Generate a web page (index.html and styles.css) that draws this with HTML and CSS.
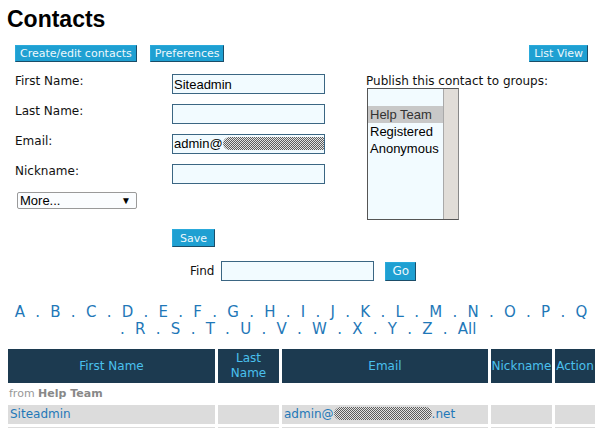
FILE: index.html
```html
<!DOCTYPE html>
<html>
<head>
  <title>Contacts</title>
  <link rel="stylesheet" href="styles.css">
</head>
<body>
  <h1>Contacts</h1>

  <div class="toolbar">
    <div class="toolbar-left">
      <button class="btn">Create/edit contacts</button>
      <button class="btn">Preferences</button>
    </div>
    <button class="btn">List View</button>
  </div>

  <form class="contact-form">
    <div class="fields">
      <div class="field-row">
        <label>First Name:</label>
        <input class="text-input" type="text" value="Siteadmin">
      </div>
      <div class="field-row">
        <label>Last Name:</label>
        <input class="text-input" type="text">
      </div>
      <div class="field-row">
        <label>Email:</label>
        <div class="text-input">admin@<span class="redacted wide"></span></div>
      </div>
      <div class="field-row">
        <label>Nickname:</label>
        <input class="text-input" type="text">
      </div>
      <div class="more-select">
        <span>More...</span>
        <span class="arrow">&#9660;</span>
      </div>
    </div>

    <div class="groups">
      <div class="groups-label">Publish this contact to groups:</div>
      <div class="group-list">
        <div class="options">
          <div class="option">&nbsp;</div>
          <div class="option selected">Help Team</div>
          <div class="option">Registered</div>
          <div class="option">Anonymous</div>
        </div>
        <div class="scroll-track"></div>
      </div>
    </div>
  </form>

  <div class="actions">
    <button class="btn btn-save">Save</button>
  </div>

  <div class="find-row">
    <span class="find-label">Find</span>
    <input class="text-input" type="text">
    <button class="btn btn-go">Go</button>
  </div>

  <div class="alphabet">
    <a href="#">A</a> . <a href="#">B</a> . <a href="#">C</a> . <a href="#">D</a> . <a href="#">E</a> . <a href="#">F</a> . <a href="#">G</a> . <a href="#">H</a> . <a href="#">I</a> . <a href="#">J</a> . <a href="#">K</a> . <a href="#">L</a> . <a href="#">M</a> . <a href="#">N</a> . <a href="#">O</a> . <a href="#">P</a> . <a href="#">Q</a> . <a href="#">R</a> . <a href="#">S</a> . <a href="#">T</a> . <a href="#">U</a> . <a href="#">V</a> . <a href="#">W</a> . <a href="#">X</a> . <a href="#">Y</a> . <a href="#">Z</a> . <a href="#">All</a>
  </div>

  <table class="contacts">
    <colgroup>
      <col class="col-first">
      <col class="col-last">
      <col class="col-email">
      <col class="col-nick">
      <col class="col-action">
    </colgroup>
    <thead>
      <tr>
        <th>First Name</th>
        <th>Last Name</th>
        <th>Email</th>
        <th>Nickname</th>
        <th>Action</th>
      </tr>
    </thead>
    <tbody>
      <tr class="group-row">
        <td colspan="5">from <b>Help Team</b></td>
      </tr>
      <tr class="data-row">
        <td><a href="#">Siteadmin</a></td>
        <td></td>
        <td><a href="#">admin@<span class="redacted"></span>.net</a></td>
        <td></td>
        <td></td>
      </tr>
      <tr class="data-row">
        <td>&nbsp;</td>
        <td></td>
        <td></td>
        <td></td>
        <td></td>
      </tr>
    </tbody>
  </table>
</body>
</html>
```

FILE: styles.css
```css
body {
  margin: 0;
  padding: 0 7px;
  font-family: "DejaVu Sans", Verdana, sans-serif;
  font-size: 12px;
  color: #111;
  background: #fff;
}

h1 {
  margin: 6px 0 0 0;
  font-family: "Liberation Sans", Arial, sans-serif;
  font-size: 23px;
  line-height: 26px;
  font-weight: bold;
  color: #000;
}

.btn {
  font-family: "DejaVu Sans", Verdana, sans-serif;
  font-size: 11px;
  line-height: 13px;
  color: #eef8fd;
  background-color: #1fa0d2;
  border: 1px solid;
  border-color: #2aaadb #1b4d68 #1b4d68 #2aaadb;
  padding: 1px 4px 1px 4px;
  margin: 0;
  border-radius: 0;
}

.toolbar {
  display: flex;
  justify-content: space-between;
  margin: 13px 11px 0 8px;
}

.toolbar-left {
  display: flex;
  gap: 13px;
}

.contact-form {
  display: flex;
  margin: 12px 0 0 8px;
}

.fields {
  width: 351px;
}

.field-row {
  display: flex;
  height: 20px;
  margin-bottom: 10px;
}

.field-row label {
  width: 157px;
  line-height: 14px;
}

.text-input {
  box-sizing: border-box;
  width: 153px;
  height: 20px;
  margin: 0;
  padding: 0 1px;
  border: 1px solid #3b6683;
  background-color: #f2fbff;
  font-family: "Liberation Sans", Arial, sans-serif;
  font-size: 13px;
  line-height: 18px;
  color: #000;
  overflow: hidden;
  white-space: nowrap;
}

.redacted {
  display: inline-block;
  vertical-align: -2px;
  width: 98px;
  height: 13px;
  border-radius: 7px;
  background: repeating-conic-gradient(#5e5e5e 0 25%, #e4e4e4 0 50%) 0 0 / 2px 2px;
}

.redacted.wide {
  width: 110px;
}

.more-select {
  box-sizing: border-box;
  display: flex;
  justify-content: space-between;
  align-items: center;
  width: 120px;
  height: 17px;
  margin: -2px 0 0 2px;
  padding: 0 5px 0 2px;
  border: 1px solid #9a9a9a;
  border-radius: 2px;
  background: #fbfdff;
  font-family: "Liberation Sans", Arial, sans-serif;
  font-size: 13px;
  color: #000;
}

.more-select .arrow {
  font-size: 10px;
}

.groups-label {
  line-height: 14px;
}

.group-list {
  display: flex;
  width: 92px;
  height: 132px;
  margin-left: 1px;
  border: 1px solid #555;
  border-right-color: #888;
  box-sizing: border-box;
  background: #f2fbff;
}

.options {
  flex: 1;
  font-family: "Liberation Sans", Arial, sans-serif;
  font-size: 13px;
  line-height: 17px;
  color: #000;
}

.option {
  padding-left: 2px;
}

.option.selected {
  background: #c8c8c8;
  color: #333;
}

.scroll-track {
  width: 14px;
  background: #e1ddd8;
  border-left: 1px solid #a9a9a9;
}

.actions {
  margin: 9px 0 0 165px;
}

.btn-save {
  padding: 2px 7px 1px 7px;
}

.find-row {
  display: flex;
  justify-content: center;
  align-items: center;
  margin-top: 14px;
}

.find-label {
  margin-right: 7px;
}

.btn-go {
  font-size: 12px;
  line-height: 15px;
  padding: 1px 6px;
  margin-left: 11px;
}

.alphabet {
  margin-top: 23px;
  padding-right: 4px;
  text-align: center;
  font-size: 15px;
  line-height: 17px;
  color: #1f78b8;
}

.alphabet a {
  padding: 0 5.5px;
}

a {
  color: #1f78b8;
  text-decoration: none;
}

.contacts {
  table-layout: fixed;
  width: 593px;
  margin: 8px 0 0 -2px;
  border-spacing: 3px;
}

.col-first { width: 207px; }
.col-last { width: 61px; }
.col-email { width: 206px; }
.col-nick { width: 61px; }
.col-action { width: 40px; }

.contacts th {
  height: 34px;
  padding: 2px 0;
  box-sizing: border-box;
  background-color: #1c3a50;
  color: #4ac0ee;
  font-weight: normal;
  font-size: 12px;
  line-height: 15px;
  text-align: center;
}

.group-row td {
  padding: 0 1px;
  font-size: 11px;
  line-height: 16px;
  color: #999;
}

.group-row b {
  color: #888;
}

.data-row td {
  height: 19px;
  padding: 0 2px;
  background-color: #dcdcdc;
  line-height: 19px;
  font-size: 12px;
  white-space: nowrap;
  overflow: hidden;
}
```
